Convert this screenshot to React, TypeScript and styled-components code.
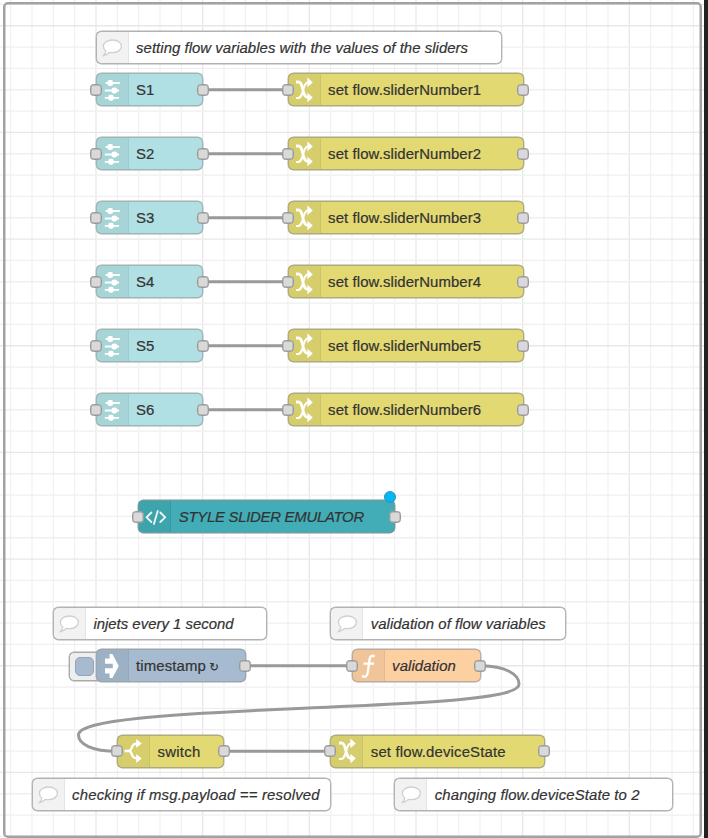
import React from "react";
import styled, { createGlobalStyle } from "styled-components";

const GlobalStyle = createGlobalStyle`
  body { margin: 0; background: #fff; overflow: hidden; }
  * { box-sizing: border-box; }
`;

const STEP = 64 / 3;

const Workspace = styled.main`
  position: relative;
  width: 708px;
  height: 838px;
  overflow: hidden;
  background: #fff;
  border-right: 4px solid #222;
  font-family: "Liberation Sans", Arial, sans-serif;
`;

const Layer = styled.svg`
  position: absolute;
  inset: 0;
  width: 708px;
  height: 838px;
`;

const Group = styled.section`
  position: absolute;
  left: 3px;
  top: 2px;
  width: 699px;
  height: 836px;
  border: 2px solid #a2a2a2;
  box-shadow: inset 0 0 0 0.5px #a2a2a2;
  border-radius: 5px;
`;

const NodeBox = styled.div<{ $x: number; $y: number; $w: number; $fill: string; $line: string }>`
  position: absolute;
  left: ${(p) => p.$x - 0.5}px;
  top: ${(p) => p.$y - 16.5}px;
  width: ${(p) => p.$w + 1}px;
  height: 33px;
  display: flex;
  align-items: stretch;
  background: ${(p) => p.$fill};
  border: 1px solid ${(p) => p.$line};
  box-shadow: 0 0 0 0.4px ${(p) => p.$line};
  border-radius: 5.5px;
`;

const IconCell = styled.div<{ $divider: string }>`
  flex: none;
  width: 32px;
  height: 31px;
  background: rgba(0, 0, 0, 0.05);
  border-right: 1px solid ${(p) => p.$divider};
  border-radius: 4px 0 0 4px;
  svg { display: block; margin: -0.5px 0 0 -0.5px; }
`;

const Label = styled.span<{ $italic?: boolean; $spacing: number }>`
  padding-left: 7.6px;
  font-size: 14.93px;
  line-height: 31px;
  white-space: pre;
  color: #333;
  -webkit-text-stroke: 0.2px #333;
  font-style: ${(p) => (p.$italic ? "italic" : "normal")};
  letter-spacing: ${(p) => p.$spacing}px;
`;

const Repeat = styled.span`
  font-family: "DejaVu Sans", sans-serif;
  font-size: 11.5px;
  line-height: 1;
`;

const Port = styled.i<{ $side: "left" | "right" }>`
  position: absolute;
  ${(p) => p.$side}: ${(p) => (p.$side === "left" ? -7 : -6.5)}px;
  top: 9.6px;
  width: 12px;
  height: 12px;
  background: #d9d9d9;
  border: 1px solid #999;
  box-shadow: inset 0 0 0 0.4px #999;
  border-radius: 3.5px;
`;

const ChangedDot = styled.i`
  position: absolute;
  right: -2px;
  top: -10px;
  width: 12px;
  height: 12px;
  border-radius: 50%;
  background: #00b7f8;
  border: 1px solid #3a8fb0;
`;

const InjectButton = styled.div`
  position: absolute;
  left: 69px;
  top: 652px;
  width: 34px;
  height: 29px;
  padding: 4px 0 0 4.5px;
  background: #eee;
  border: 1px solid #aaa;
  box-shadow: 0 0 0 0.4px #aaa;
  border-radius: 5px;
`;

const InjectButtonFace = styled.div`
  width: 19px;
  height: 19px;
  background: #a6bbcf;
  border: 1px solid #94a5b6;
  border-radius: 5px;
`;

type Kind = "slider" | "change" | "template" | "comment" | "inject" | "fn" | "switch";

const glyphs: Record<Kind, React.ReactNode> = {
  slider: (
    <g stroke="#fff" strokeWidth="1.8" fill="#fff">
      <path d="M9.6 9H23.8M8.8 16.5H23M8.8 23.8H23" />
      <g stroke="none">
        <rect x="11.4" y="6" width="5.6" height="6" rx="2.2" />
        <rect x="15.6" y="13.5" width="5.6" height="6" rx="2.2" />
        <rect x="12.2" y="20.8" width="5.6" height="6" rx="2.2" />
      </g>
    </g>
  ),
  change: (
    <g>
      <g fill="none" stroke="#fff">
        <path d="M8 8H10.2C13 8 13.6 10.5 14.8 15.5S17 23.6 20.5 23.6" strokeWidth="2.8" />
        <path d="M8 24H10C13 24 13.8 21 15 16.5S17.2 8.3 20.5 8.3" strokeWidth="2" />
      </g>
      <path d="M19.4 3.6L24.8 8.4L19.4 13.2ZM19.4 18.7L24.8 23.5L19.4 28.3Z" fill="#fff" />
    </g>
  ),
  template: (
    <path
      d="M12.4 11.5L7.6 16.3L12.4 21M21.3 11.5L26.1 16.3L21.3 21M18.8 9.8L14.9 23"
      fill="none"
      stroke="#eef8f9"
      strokeWidth="1.8"
      strokeLinecap="round"
    />
  ),
  comment: (
    <path
      d="M16.5 9C21.6 9 25.4 11.7 25.4 15.3S21.6 21.7 16.5 21.7C15.5 21.7 14.5 21.6 13.6 21.3C12 22.8 10.2 24 7.6 24.5C9 22.9 9.5 21.6 9.8 19.9C8.2 18.7 7.4 17.1 7.4 15.3C7.4 11.7 11.4 9 16.5 9Z"
      fill="#fff"
      stroke="#d0d0d0"
      strokeWidth="1.3"
    />
  ),
  inject: (
    <path
      d="M9 8.6H13.6V4H16.4L22.8 16L16.4 28H13.6V23.4H9V18.2H16.8V13.8H9Z"
      fill="#fff"
    />
  ),
  fn: (
    <path
      d="M22.6 6.6C20 4.8 18 6 17.5 9.6L15.8 22.2C15.3 26.7 13 27.8 10 25.8M11.5 13.6H22"
      fill="none"
      stroke="#fff"
      strokeWidth="2.3"
    />
  ),
  switch: (
    <g>
      <path
        d="M7.5 16H11.5C14.5 16 14.5 12.5 15.5 11C16.5 9.3 18 8.5 20.5 8.5M12 16C14.5 16 14.5 19.5 15.5 21C16.5 22.7 18 23.5 20.5 23.5"
        fill="none"
        stroke="#fff"
        strokeWidth="2.3"
      />
      <path d="M19.2 4L24.7 8.5L19.2 13ZM19.2 19L24.7 23.5L19.2 28Z" fill="#fff" />
    </g>
  ),
};

const palette: Record<Kind, { fill: string; line: string; divider: string }> = {
  slider: { fill: "#b0e0e3", line: "#9eb5b6", divider: "#9dcbcf" },
  change: { fill: "#e2d972", line: "#aeaa80", divider: "#cbc367" },
  template: { fill: "#42adb6", line: "#72999c", divider: "#3998a1" },
  comment: { fill: "#fff", line: "#b2b2b2", divider: "#e4e4e4" },
  inject: { fill: "#a6bbcf", line: "#9ba6b0", divider: "#95a9bb" },
  fn: { fill: "#fdd0a2", line: "#b9ac9e", divider: "#e2bb92" },
  switch: { fill: "#e2d972", line: "#aeaa80", divider: "#cbc367" },
};

interface NodeSpec {
  kind: Kind;
  label: string;
  x: number;
  y: number;
  w: number;
  ports?: "both" | "out" | "none";
  italic?: boolean;
  spacing?: number;
  changed?: boolean;
  repeats?: boolean;
}

const rows = [1, 2, 3, 4, 5, 6];

const nodes: NodeSpec[] = [
  { kind: "comment", label: "setting flow variables with the values of the sliders", x: 96, y: 47, w: 405.3, ports: "none", italic: true, spacing: 0.035 },
  ...rows.flatMap((n): NodeSpec[] => {
    const y = 25.67 + n * 64;
    return [
      { kind: "slider", label: `S${n}`, x: 96, y, w: 106.7 },
      { kind: "change", label: `set flow.sliderNumber${n}`, x: 288, y, w: 235, spacing: 0.1 },
    ];
  }),
  { kind: "template", label: "STYLE SLIDER EMULATOR", x: 138.7, y: 516.5, w: 256.3, italic: true, changed: true, spacing: -0.28 },
  { kind: "comment", label: "injets every 1 second", x: 53.3, y: 623.3, w: 213.4, ports: "none", italic: true },
  { kind: "comment", label: "validation of flow variables", x: 330.7, y: 623.3, w: 235, ports: "none", italic: true, spacing: 0.03 },
  { kind: "inject", label: "timestamp", x: 96, y: 665.7, w: 149.3, ports: "out", repeats: true, spacing: 0.1 },
  { kind: "fn", label: "validation", x: 352, y: 665.7, w: 128.3, italic: true, spacing: 0.08 },
  { kind: "switch", label: "switch", x: 117.3, y: 751, w: 106.7, spacing: 0.3 },
  { kind: "change", label: "set flow.deviceState", x: 330.7, y: 751, w: 213.8, spacing: 0.15 },
  { kind: "comment", label: "checking if msg.payload == resolved", x: 32, y: 794, w: 298.5, ports: "none", italic: true, spacing: 0.18 },
  { kind: "comment", label: "changing flow.deviceState to 2", x: 394.7, y: 794, w: 277.8, ports: "none", italic: true, spacing: 0.11 },
];

function FlowNode({ kind, label, x, y, w, ports = "both", italic, spacing = 0, changed, repeats }: NodeSpec) {
  const c = palette[kind];
  return (
    <NodeBox $x={x} $y={y} $w={w} $fill={c.fill} $line={c.line}>
      <IconCell $divider={c.divider}>
        <svg width="32" height="32" viewBox="0 0 32 32">{glyphs[kind]}</svg>
      </IconCell>
      <Label $italic={italic} $spacing={spacing}>
        {label}
        {repeats && <Repeat>{" ↻"}</Repeat>}
      </Label>
      {ports === "both" && <Port $side="left" />}
      {ports !== "none" && <Port $side="right" />}
      {changed && <ChangedDot />}
    </NodeBox>
  );
}

function Grid() {
  const cols = Array.from({ length: 33 }, (_, i) => i);
  const lines = Array.from({ length: 40 }, (_, i) => i);
  return (
    <Layer viewBox="0 0 708 838" strokeWidth="1.3">
      {cols.map((i) => (
        <path key={i} d={`M${10.67 + i * STEP} 0V838`} stroke={i % 5 === 4 ? "#e8e8e8" : "#f1f1f1"} />
      ))}
      {lines.map((i) => (
        <path key={i} d={`M0 ${4.4 + i * STEP}H704`} stroke={i % 5 === 1 ? "#e8e8e8" : "#efefef"} />
      ))}
    </Layer>
  );
}

function Wires() {
  return (
    <Layer viewBox="0 0 708 838" fill="none" stroke="#999" strokeWidth="3">
      {rows.map((n) => (
        <path key={n} d={`M203 ${25.8 + n * 64}H288`} />
      ))}
      <path d="M245 665.8H352" />
      <path d="M224 751.3H331" />
      <path d="M481 665.8C505 666 519 674 519 684C519 699 430 703 298.7 708.5C167 714 78.5 720 78.5 735C78.5 744 92 751.3 117 751.3" />
    </Layer>
  );
}

export default function App() {
  return (
    <>
      <GlobalStyle />
      <Workspace>
        <Grid />
        <Group />
        <Wires />
        <InjectButton>
          <InjectButtonFace />
        </InjectButton>
        {nodes.map((n) => (
          <FlowNode key={n.label} {...n} />
        ))}
      </Workspace>
    </>
  );
}
